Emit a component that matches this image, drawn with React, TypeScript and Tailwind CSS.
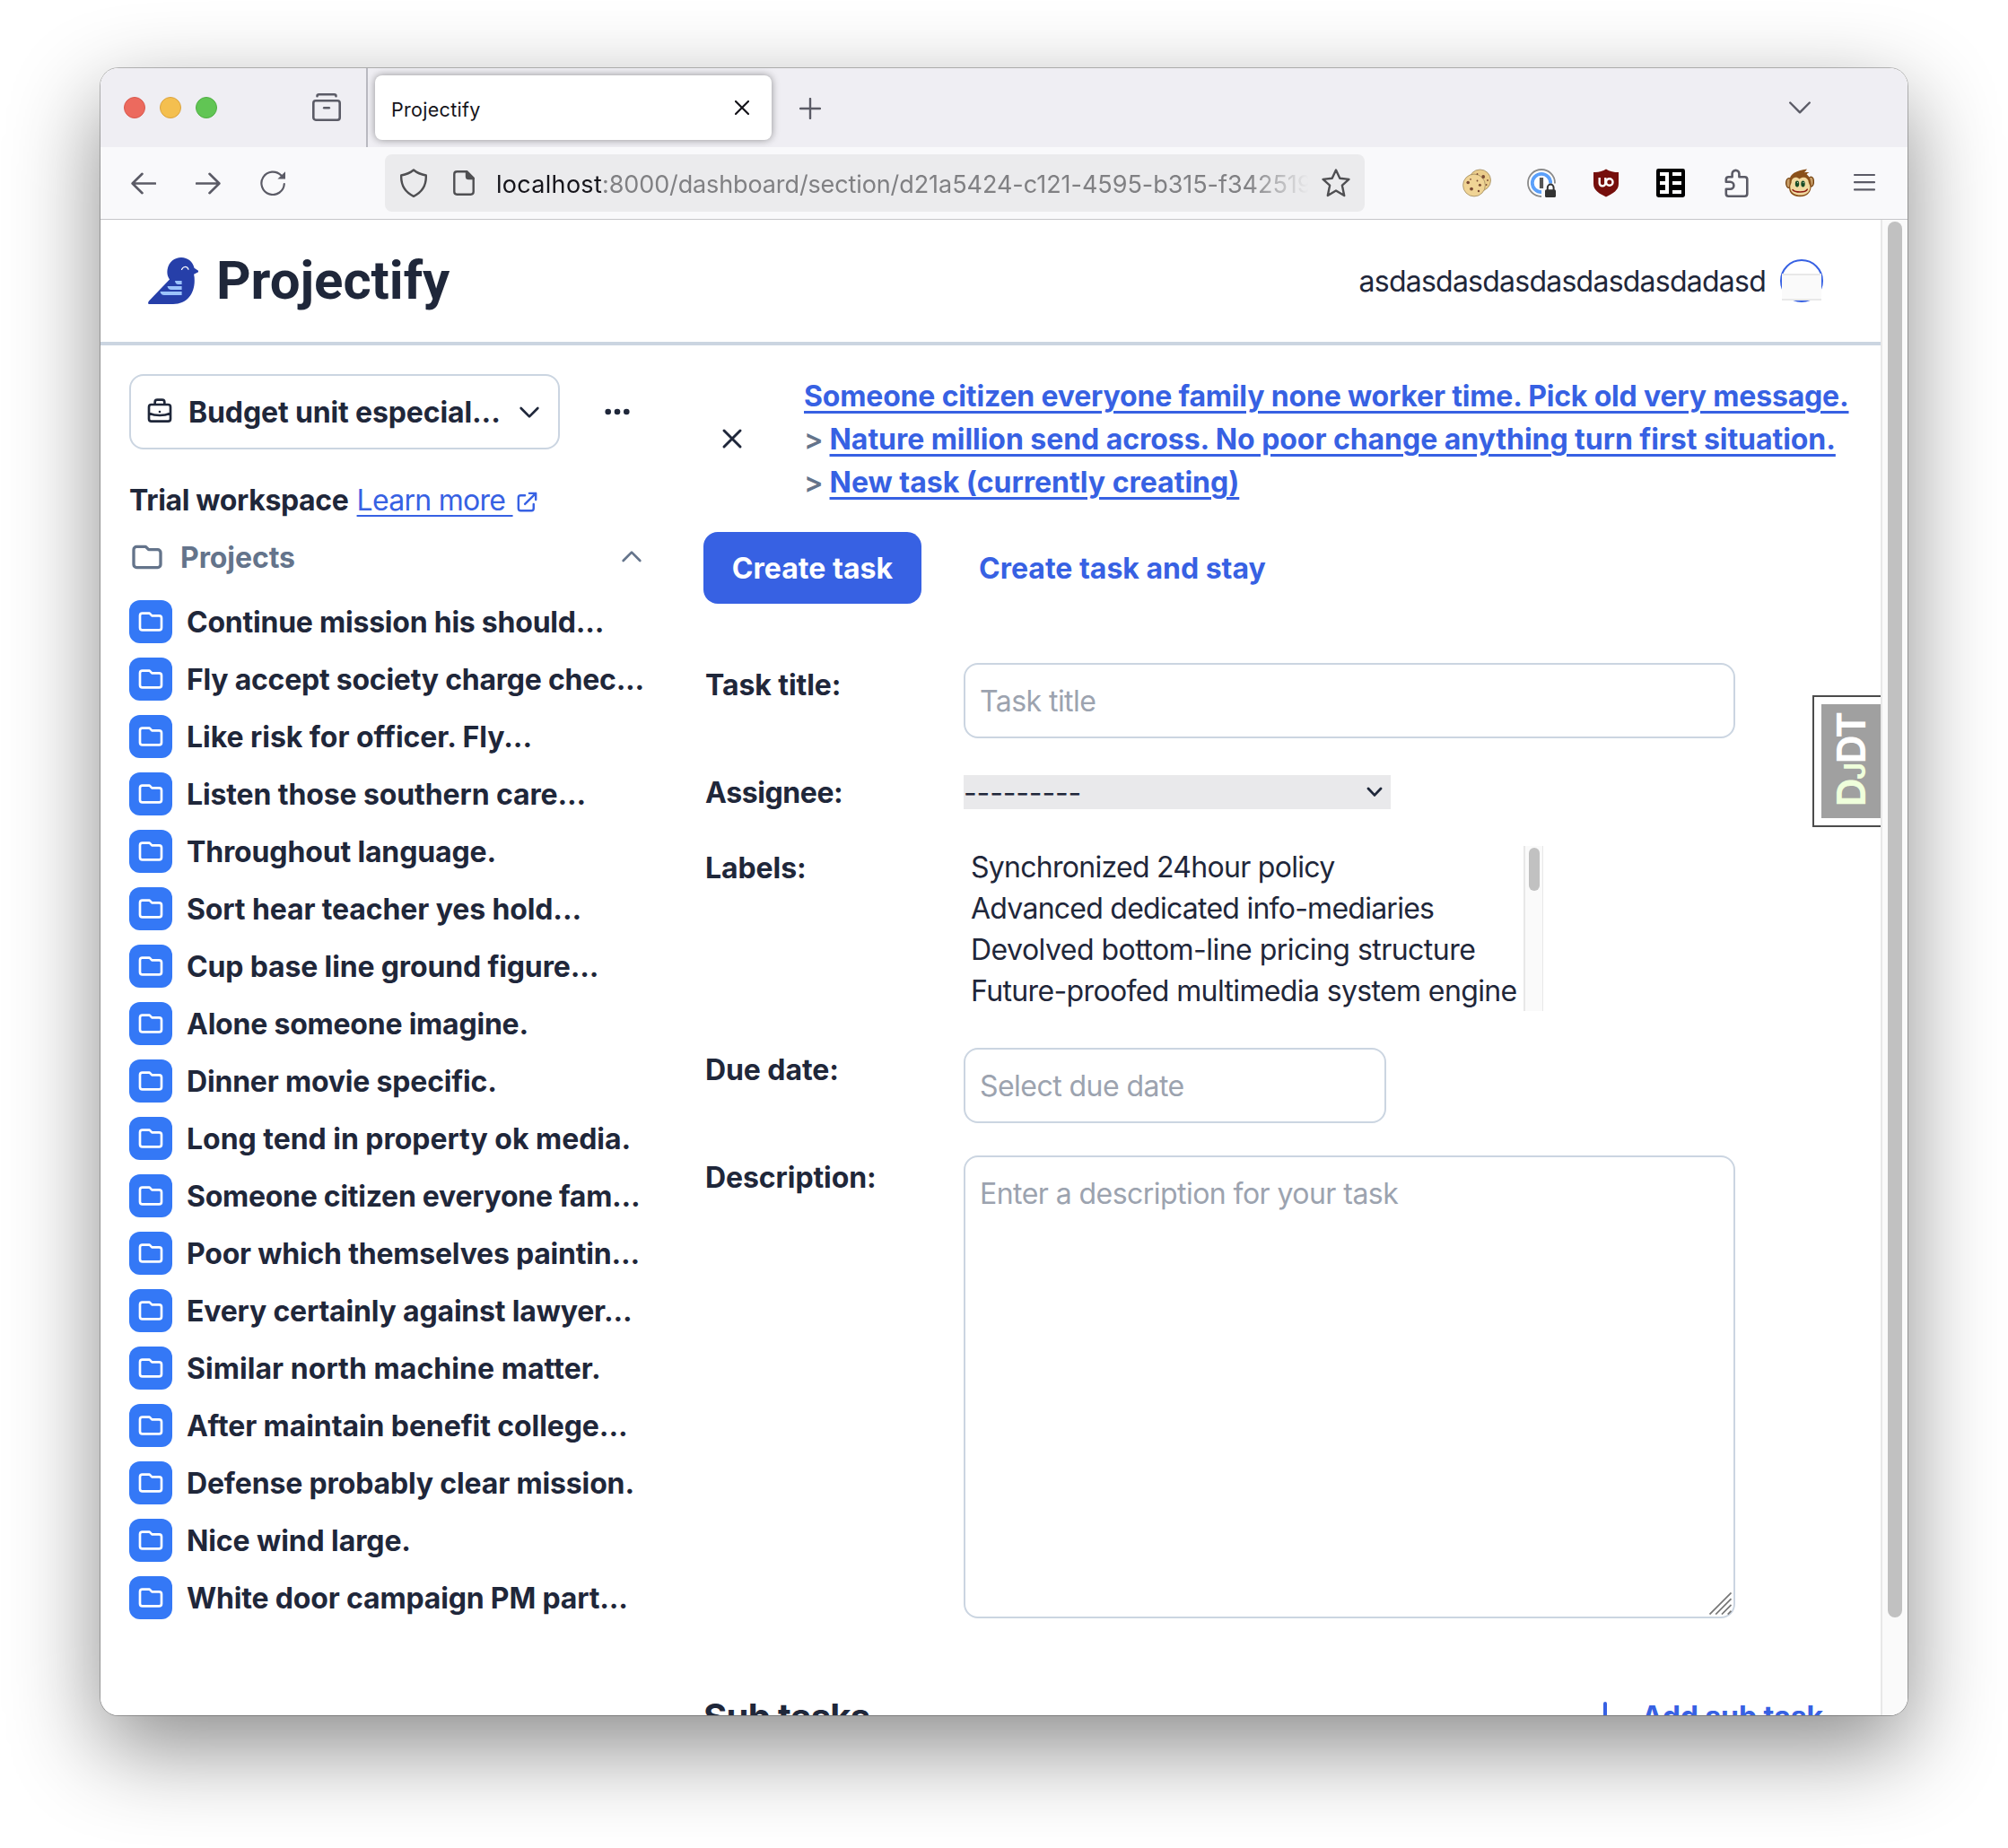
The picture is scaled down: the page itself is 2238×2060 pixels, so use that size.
import React from "react";

type IconProps = { className?: string; children: React.ReactNode; width?: number };

// 24-unit outline icon
function Outline({ className = "", children, width = 2 }: IconProps) {
  return (
    <svg viewBox="0 0 24 24" fill="none" stroke="currentColor" strokeWidth={width} strokeLinecap="round" strokeLinejoin="round" className={`shrink-0 ${className}`}>
      {children}
    </svg>
  );
}

// 32-unit browser chrome icon
function Chrome({ className = "", children, width = 2.6 }: IconProps) {
  return (
    <svg viewBox="0 0 32 32" fill="none" stroke="currentColor" strokeWidth={width} strokeLinecap="round" strokeLinejoin="round" className={`size-8 shrink-0 ${className}`}>
      {children}
    </svg>
  );
}

const FolderPath = () => <path d="M3 7v10a2 2 0 002 2h14a2 2 0 002-2V9a2 2 0 00-2-2h-6l-2-2H5a2 2 0 00-2 2z" />;

function TabStrip() {
  return (
    <div className="flex h-[88px] shrink-0 items-center bg-[#efeef3] pl-[26px] pr-[108px]">
      <div className="flex gap-4">
        <span className="size-6 rounded-full border border-[#d9584d] bg-[#ec6a5e]" />
        <span className="size-6 rounded-full border border-[#dba33f] bg-[#f4bf4f]" />
        <span className="size-6 rounded-full border border-[#4fae42] bg-[#61c554]" />
      </div>
      <Chrome className="ml-[106px] text-[#5b5b66]">
        <path d="M5.5 3.2c0-1.2.8-1.9 2-1.9h17c1.2 0 2 .7 2 1.9" />
        <rect x="1.3" y="8.3" width="29.4" height="21.4" rx="2.6" />
        <path d="M13.2 16.3h5.6" />
      </Chrome>
      <span className="ml-7 h-full w-[2px] bg-[#b9b9c1]" />
      <div className="ml-2 flex h-[72px] w-[442px] items-center justify-between rounded-lg bg-white pl-[18px] pr-[25px] shadow-[0_0_8px_rgba(0,0,0,0.4)]">
        <span className="pt-1 text-[21.5px] leading-8 tracking-[0.3px] text-[#15141a]">Projectify</span>
        <svg viewBox="0 0 16 16" className="size-4" stroke="#15141a" strokeWidth="2.2" strokeLinecap="round">
          <path d="M1 1l14 14M15 1L1 15" />
        </svg>
      </div>
      <svg viewBox="0 0 24 24" className="ml-[31px] mt-0.5 size-6" stroke="#5b5b66" strokeWidth="2.4" strokeLinecap="round">
        <path d="M12 1v22M1 12h22" />
      </svg>
      <svg viewBox="0 0 24 14" className="ml-auto h-3.5 w-6" fill="none" stroke="#5b5b66" strokeWidth="2.4" strokeLinecap="round" strokeLinejoin="round">
        <path d="M1.2 1.5L12 12.3 22.8 1.5" />
      </svg>
    </div>
  );
}

function CookieIcon() {
  return (
    <svg viewBox="0 0 32 32" className="size-8">
      <circle cx="19.5" cy="13" r="12" fill="#ebcd8b" stroke="#a08a5e" strokeWidth=".8" />
      <circle cx="13" cy="18.5" r="12.4" fill="#f0d495" stroke="#a08a5e" strokeWidth=".8" />
      <g fill="#7a4a33">
        <circle cx="6.2" cy="15.500" r="1.8" />
        <circle cx="10" cy="22.600" r="1.9" />
        <circle cx="19.4" cy="18.200" r="1.5" />
        <circle cx="18" cy="25" r="1.2" />
        <circle cx="16.5" cy="13.500" r=".9" />
        <circle cx="9" cy="11.800" r=".9" />
        <circle cx="23.2" cy="9" r="1.9" />
        <circle cx="16.500" cy="6" r=".9" />
        <circle cx="28" cy="13" r=".9" />
        <circle cx="26.6" cy="18" r=".9" />
      </g>
    </svg>
  );
}

function KeyringIcon() {
  return (
    <svg viewBox="0 0 32 32" className="size-8">
      <circle cx="16" cy="16" r="15" fill="#fff" stroke="#8a8a8a" strokeWidth="1.8" />
      <circle cx="16" cy="16" r="10.2" fill="none" stroke="#5ba0fa" strokeWidth="3.8" />
      <rect x="16" y="16.5" width="16" height="15.5" fill="#f9f9fb" />
      <rect x="13.9" y="10" width="4.2" height="12" fill="#555" />
      <path d="M22.8 24v-3a3.4 3.4 0 016.8 0v3" fill="none" stroke="#333" strokeWidth="2" />
      <rect x="20" y="23.2" width="12" height="8.8" rx="1.6" fill="#333" />
    </svg>
  );
}

function ShieldBlockIcon() {
  return (
    <svg viewBox="0 0 32 32" className="size-8">
      <path d="M16 .4c4 2.6 9 3.7 14 3.7v13c0 7-6 10.500-14 14.500C8 27.600 2 24.100 2 17.100V4.100c5 0 10-1.100 14-3.700z" fill="#760f0c" />
      <g fill="none" stroke="#fff" strokeWidth="2.4">
        <path d="M8.700 10v6.300a3 3 0 003 3h.6a3 3 0 003-3V10" />
        <circle cx="19.800" cy="15" r="3.700" />
      </g>
    </svg>
  );
}

function GridIcon() {
  return (
    <svg viewBox="0 0 32 32" className="size-8">
      <rect width="32" height="32" rx="2.4" fill="#000" />
      <path d="M4 4h10v24H4v-4h6v-6H4v-4h6V8H4z M18 4h10v4H18z M18 14h10v4H18z M18 24h10v4H18z" fill="#fff" />
    </svg>
  );
}

function MonkeyIcon() {
  return (
    <svg viewBox="0 0 32 32" className="size-8">
      <ellipse cx="4" cy="16" rx="3.300" ry="5.400" fill="#c9a06a" stroke="#74420f" strokeWidth="1.400" />
      <ellipse cx="28.400" cy="14.500" rx="3" ry="5.400" fill="#c9a06a" stroke="#74420f" strokeWidth="1.400" />
      <path d="M4.500 13C5 6 11 2.500 24 .6c-1 1.600-1.600 2.400-3 3.600 2.200-.3 3.600-.4 5.600 0-2 .8-2.400 1-3 2 3.400 2.800 4.600 6.400 5 11 .8 8-3.600 14-12.600 14S2.500 26 4.500 17z" fill="#8a5019" />
      <path d="M5.400 22c-.6-3.400.6-4.500 1.200-6.500C6.500 10 12 8 15.500 11.500c4-3.500 10-1.500 10.200 3.500.4 2 2.100 3.500 1.700 6.500-.8 5.600-5 8-10.800 8S6.400 27.600 5.400 22z" fill="#f1d9a0" />
      <ellipse cx="13" cy="17" rx="2.200" ry="3.400" fill="#184a25" />
      <ellipse cx="19.500" cy="17" rx="2.200" ry="3.400" fill="#184a25" />
      <circle cx="13.500" cy="15.600" r=".7" fill="#cfe8cf" />
      <circle cx="20" cy="15.600" r=".7" fill="#cfe8cf" />
      <path d="M8 23.500c1.500 2 4.500 2.500 8.300 2.500s6.700-.5 8-2.900" fill="none" stroke="#8f1d14" strokeWidth="1.500" strokeLinecap="round" />
    </svg>
  );
}

function Toolbar() {
  return (
    <div className="flex h-[81px] shrink-0 items-center border-b border-[#c6c6c9] bg-[#f9f9fb] pl-[34px] pr-8 text-[#5b5b66]">
      <div className="flex gap-11">
        <svg viewBox="0 0 28 28" className="size-7" fill="none" stroke="currentColor" strokeWidth="2.600" strokeLinecap="round" strokeLinejoin="round">
          <path d="M27 14.500H1.800M12.500 3.800L1.600 14.500l10.900 10.700" />
        </svg>
        <svg viewBox="0 0 28 28" className="size-7" fill="none" stroke="currentColor" strokeWidth="2.600" strokeLinecap="round" strokeLinejoin="round">
          <path d="M1 14.500h25.200M15.500 3.800l10.900 10.700-10.900 10.700" />
        </svg>
        <svg viewBox="0 0 28 28" className="size-7" fill="none" stroke="currentColor" strokeWidth="2.200" strokeLinecap="round">
          <path d="M23.400 5.600A12.700 12.700 0 1026.800 15" />
          <path d="M28 1.200v8.400h-8.600z" fill="currentColor" stroke="none" />
        </svg>
      </div>
      <div className="ml-[111px] flex h-16 w-[1092px] items-center rounded-lg bg-[#ebebed] pl-4 pr-4">
        <Chrome className="text-[#4f4f52]" width={2.400}>
          <path d="M16 1.500c4 3.300 8.300 5 13.800 6C30.300 18.500 25 26.500 16 30.800 7 26.500 1.700 18.500 2.200 7.500 7.700 6.500 12 4.800 16 1.500z" />
        </Chrome>
        <svg viewBox="0 0 24 28" className="ml-7 h-7 w-6" fill="none" stroke="#4f4f52" strokeWidth="2.400" strokeLinejoin="round">
          <path d="M15.500 1.300H4.200a2.900 2.900 0 00-2.900 2.900v19.600a2.900 2.900 0 002.900 2.900h15.600a2.900 2.900 0 002.900-2.900V8.500z" />
          <path d="M15 1.300l7.700 7.700h-5.400A2.300 2.300 0 0115 6.700z" fill="#4f4f52" />
        </svg>
        <div className="ml-6 flex-1 overflow-hidden whitespace-nowrap pt-[3px] text-[27px] leading-10 text-[#808083] [mask-image:linear-gradient(to_right,black_92%,transparent_99.500%)]">
          <span className="tracking-[0.3px] text-[#15141a]">localhost</span>
          <span className="tracking-[-0.120px]">:8000/dashboard/section/</span>
          <span className="tracking-[-0.040px]">d21a5424-c121-4595-b315-f342519</span>
        </div>
        <Chrome className="ml-2.5 text-[#4f4f52]" width={2.400}>
          <path d="M16 1.600l4.300 9.200 10.100 1.100-7.500 6.800 2.300 11.300-9.200-5.500L6.800 30l2.300-11.300-7.500-6.800 10.100-1.100z" />
        </Chrome>
      </div>
      <div className="ml-auto flex gap-10">
        <CookieIcon />
        <KeyringIcon />
        <ShieldBlockIcon />
        <GridIcon />
        <Chrome className="text-[#5b5b66]">
          <path d="M8.500 9.300h4.100V5.800a3.900 3.900 0 017.800 0v3.500h6.200a2.700 2.700 0 012.700 2.700v16a2.700 2.700 0 01-2.700 2.700H8.500A2.700 2.700 0 015.800 28v-5.300h4.600a4 4 0 000-8H5.800v-2.700A2.700 2.700 0 018.500 9.300" />
        </Chrome>
        <MonkeyIcon />
        <Chrome className="text-[#5b5b66]" width={2.200}>
          <path d="M5 7h22M5 15.200h22M5 23.400h22" />
        </Chrome>
      </div>
    </div>
  );
}

function BirdLogo() {
  return (
    <svg viewBox="0 0 56 52" className="h-[52px] w-14">
      <path d="M1 48.500L24 24.500c-2.400-3.300-3-7-2.400-11C23 5 29.500 0 37 0c7.500 0 13 5 14.500 11.700l4.800 3.200c.5.500.4 1-.2 1.300l-5 2.600c.6 2.300.7 4.700.7 7C51.800 41 43 52 28 52H1.500C0 52-.5 50.500 1 48.500z" fill="#263fa9" />
      <path d="M37.500 13.500c1.500-4 6-4 7.500-.2" fill="none" stroke="#fff" strokeWidth="1.200" strokeLinecap="round" />
      <path d="M30 26h7.600v4h-4c-2 0-3.300-1.500-3.600-4zM21.500 32h16.100v4H26c-2.500 0-4-1.500-4.500-4zM13.500 38h24.100v4H18c-2.500 0-4-1.500-4.500-4z" fill="#9cc3fb" />
    </svg>
  );
}

function Header() {
  return (
    <header className="flex h-[140px] shrink-0 items-center border-b-4 border-[#cbd5e1] pl-[53px] pr-16">
      <BirdLogo />
      <span className="ml-5 font-[Roboto] text-[60px] font-bold leading-[72px] tracking-[-0.050px]">Projectify</span>
      <span className="ml-auto pt-0.5 text-[32px] leading-[48px] tracking-[-0.760px]">asdasdasdasdasdasdasdadasd</span>
      <div className="ml-4 flex size-12 items-center justify-center rounded-full border-2 border-[#3761e3]">
        <div className="mt-3.5 h-[30px] w-11 shrink-0 border-y-2 border-[#e8e8e8] bg-[#fafafa]" />
      </div>
    </header>
  );
}

const projects: [string, string][] = [
  ["Continue mission his should...", "tracking-[-0.230px]"],
  ["Fly accept society charge chec...", "tracking-[-0.240px]"],
  ["Like risk for officer. Fly...", "tracking-[-0.040px]"],
  ["Listen those southern care...", "tracking-[-0.120px]"],
  ["Throughout language.", "tracking-[-0.150px]"],
  ["Sort hear teacher yes hold...", "tracking-[-0.120px]"],
  ["Cup base line ground figure...", "tracking-[-0.150px]"],
  ["Alone someone imagine.", "tracking-[-0.220px]"],
  ["Dinner movie specific.", "tracking-[-0.190px]"],
  ["Long tend in property ok media.", "tracking-[-0.030px]"],
  ["Someone citizen everyone fam...", "tracking-[-0.270px]"],
  ["Poor which themselves paintin...", "tracking-[-0.210px]"],
  ["Every certainly against lawyer...", "tracking-[-0.180px]"],
  ["Similar north machine matter.", "tracking-[0.050px]"],
  ["After maintain benefit college...", "tracking-[-0.090px]"],
  ["Defense probably clear mission.", "tracking-[-0.150px]"],
  ["Nice wind large.", "tracking-[-0.100px]"],
  ["White door campaign PM part...", "tracking-[-0.170px]"],
];

function Sidebar() {
  return (
    <aside className="w-[672px] shrink-0 pl-8 pr-16 pt-8 font-bold">
      <div className="flex items-center">
        <button className="flex h-[84px] w-[480px] shrink-0 items-center rounded-2xl border-2 border-[#cbd5e1] px-4">
          <Outline className="size-8">
            <path d="M21 13.255A23.931 23.931 0 0112 15c-3.183 0-6.220-.620-9-1.745M16 6V4a2 2 0 00-2-2h-4a2 2 0 00-2 2v2m4 6h.010M5 20h14a2 2 0 002-2V8a2 2 0 00-2-2H5a2 2 0 00-2 2v10a2 2 0 002 2z" />
          </Outline>
          <span className="ml-4 whitespace-nowrap pt-0.5 tracking-[-0.130px]">Budget unit especial...</span>
          <Outline className="ml-auto size-8">
            <path d="M19 9l-7 7-7-7" />
          </Outline>
        </button>
        <svg viewBox="0 0 28 8" className="ml-[50px] h-2 w-7 shrink-0" fill="currentColor">
          <circle cx="3.700" cy="4" r="3.300" />
          <circle cx="14" cy="4" r="3.300" />
          <circle cx="24.300" cy="4" r="3.300" />
        </svg>
      </div>
      <div className="mt-[33px] flex h-12 items-center whitespace-nowrap">
        <span className="tracking-[-0.340px]">Trial workspace</span>
        <a className="ml-[9px] whitespace-pre font-normal tracking-[-0.720px] text-[#3761e3] underline decoration-2 underline-offset-[5px]">{"Learn more "}</a>
        <Outline className="ml-px mt-0.5 size-[29px] text-[#3761e3]">
          <path d="M10 6H6a2 2 0 00-2 2v10a2 2 0 002 2h10a2 2 0 002-2v-4M14 4h6m0 0v6m0-6L10 14" />
        </Outline>
      </div>
      <div className="mt-[15px] flex h-12 items-center text-[#64748b]">
        <Outline className="size-10">
          <FolderPath />
        </Outline>
        <span className="ml-[17px] pt-0.5 tracking-[-0.080px]">Projects</span>
        <Outline className="ml-auto size-8">
          <path d="M5 15l7-7 7 7" />
        </Outline>
      </div>
      <ul className="mt-6 flex flex-col gap-4">
        {projects.map(([name, tracking]) => (
          <li key={name} className="flex h-12 items-center gap-4">
            <span className="flex size-12 shrink-0 items-center justify-center rounded-xl bg-[#3478f6] text-white">
              <Outline className="size-8">
                <FolderPath />
              </Outline>
            </span>
            <span className={`whitespace-nowrap pt-0.5 ${tracking}`}>{name}</span>
          </li>
        ))}
      </ul>
    </aside>
  );
}

function Scrollbar({ className, thumb }: { className: string; thumb: string }) {
  return (
    <div className={`flex shrink-0 justify-center border-l-2 border-[#e8e8e8] bg-[#fafafa] pt-0.5 ${className}`}>
      <div className={`rounded-full bg-[#c1c1c1] ${thumb}`} />
    </div>
  );
}

function Row({ label, className, tracking = "tracking-[-0.080px]", children }: { label: string; className: string; tracking?: string; children: React.ReactNode }) {
  return (
    <div className={`flex items-start pl-0.5 ${className}`}>
      <label className={`w-72 shrink-0 pt-px font-bold ${tracking}`}>{label}</label>
      {children}
    </div>
  );
}

function Main() {
  const link = "font-bold text-[#3761e3] underline decoration-[3px] underline-offset-[5px]";
  const field = "rounded-2xl border-2 border-[#cbd5e1] text-[#9ca3af] tracking-[-0.550px]";
  return (
    <main className="flex min-w-0 flex-1 flex-col pr-16 pt-8">
      <div className="flex h-36 items-center">
        <div className="flex w-16 shrink-0 justify-center">
          <Outline className="size-9">
            <path d="M6 18L18 6M6 6l12 12" />
          </Outline>
        </div>
        <div className="ml-12 whitespace-nowrap pt-0.5">
          <div>
            <a className={`${link} tracking-[-0.170px]`}>Someone citizen everyone family none worker time. Pick old very message.</a>
          </div>
          <div>
            <span className="mr-[7px] font-semibold text-[#64748b]">&gt;</span>
            <a className={`${link} tracking-[-0.050px]`}>Nature million send across. No poor change anything turn first situation.</a>
          </div>
          <div>
            <span className="mr-[7px] font-semibold text-[#64748b]">&gt;</span>
            <a className={`${link} tracking-[0px]`}>New task (currently creating)</a>
          </div>
        </div>
      </div>
      <div className="mt-8 flex items-center font-bold">
        <button className="h-20 w-[243px] rounded-2xl bg-[#3761e3] pt-0.5 tracking-[0.050px] text-white">Create task</button>
        <button className="ml-16 pt-0.5 text-[#3761e3]">Create task and stay</button>
      </div>
      <div className="mt-[66px] flex flex-col">
        <Row label="Task title:" className="h-[120px]">
          <div className={`flex h-[84px] w-[860px] items-center pl-4 pt-0.5 ${field}`}>Task title</div>
        </Row>
        <Row label="Assignee:" className="h-[84px]" tracking="tracking-[-0.400px]">
          <div className="mt-[5px] flex h-[38px] w-[476px] items-center justify-between bg-[#e9e9eb] pr-[9px]">
            <span className="pt-0.5 tracking-[-0.150px]">---------</span>
            <svg viewBox="0 0 18 12" className="h-3 w-[18px]" fill="none" stroke="currentColor" strokeWidth="2.800" strokeLinecap="round" strokeLinejoin="round">
              <path d="M2 2l7 7.400L16 2" />
            </svg>
          </div>
        </Row>
        <Row label="Labels:" className="h-[225px]">
          <div className="flex w-[646px] justify-between pl-2">
            <ul className="whitespace-nowrap pt-px leading-[46px]">
              <li className="tracking-[-0.720px]">Synchronized 24hour policy</li>
              <li className="tracking-[-0.750px]">Advanced dedicated info-mediaries</li>
              <li className="tracking-[-0.530px]">Devolved bottom-line pricing structure</li>
              <li className="tracking-[-0.630px]">Future-proofed multimedia system engine</li>
            </ul>
            <Scrollbar className="h-[184px] w-[22px] border-r" thumb="h-12 w-3" />
          </div>
        </Row>
        <Row label="Due date:" className="h-[120px]">
          <div className={`flex h-[84px] w-[471px] items-center pl-4 pt-0.5 ${field}`}>Select due date</div>
        </Row>
        <Row label="Description:" className="h-[516px]">
          <div className={`flex h-full w-[860px] justify-between pl-4 pt-[17px] ${field}`}>
            <span>Enter a description for your task</span>
            <svg viewBox="0 0 26 26" className="mb-0.5 mr-0.5 size-[25px] self-end" stroke="#777" strokeWidth="1.800">
              <path d="M.5 25.500L25.500.5M7.500 25.500l18-18M14.500 25.500l11-11M21.500 25.500l4-4" />
            </svg>
          </div>
        </Row>
      </div>
      <div className="mt-[82px] flex h-14 items-center font-bold">
        <h2 className="whitespace-nowrap text-[40px] leading-[56px] tracking-[-0.700px]">Sub tasks</h2>
        <div className="ml-auto flex items-center gap-[23px] text-[#3761e3]">
          <svg viewBox="0 0 36 36" className="size-9" stroke="currentColor" strokeWidth="4" strokeLinecap="round">
            <path d="M18 3v30M3 18h30" />
          </svg>
          <span className="whitespace-nowrap tracking-[-0.100px]">Add sub task</span>
        </div>
      </div>
    </main>
  );
}

function DebugHandle() {
  return (
    <div className="absolute right-0 top-[530px] h-[147px] w-[76px] border-2 border-r-0 border-[#4c4c4c] bg-white py-2 pl-2">
      <div className="flex h-full w-full items-center justify-center overflow-hidden bg-[#a0a0a0] pb-[3px] pl-1">
        <div className="shrink-0 -rotate-90 whitespace-nowrap text-[44px] font-bold leading-[44px] tracking-[-1.600px] text-white">
          <span className="text-[#efffdb]">
            D<span className="text-[33px]">J</span>
          </span>
          DT
        </div>
      </div>
    </div>
  );
}

export default function App() {
  return (
    <div className="h-[2060px] w-[2238px] overflow-hidden bg-white pl-[112px] pt-[76px] font-['Inter',sans-serif]">
      <div className="h-[1836px] w-[2014px] rounded-[20px] shadow-[0_0_0_1px_rgba(0,0,0,0.25),0_36px_100px_rgba(0,0,0,0.46)]">
        <div className="flex h-full flex-col overflow-hidden rounded-[20px] bg-white">
          <TabStrip />
          <Toolbar />
          <div className="flex min-h-0 flex-1">
            <div className="relative flex w-[1984px] shrink-0 flex-col overflow-hidden text-[32px] leading-[48px] text-[#1f273a]">
              <Header />
              <div className="flex">
                <Sidebar />
                <Main />
              </div>
              <DebugHandle />
            </div>
            <Scrollbar className="w-[30px]" thumb="h-[1556px] w-4" />
          </div>
        </div>
      </div>
    </div>
  );
}
